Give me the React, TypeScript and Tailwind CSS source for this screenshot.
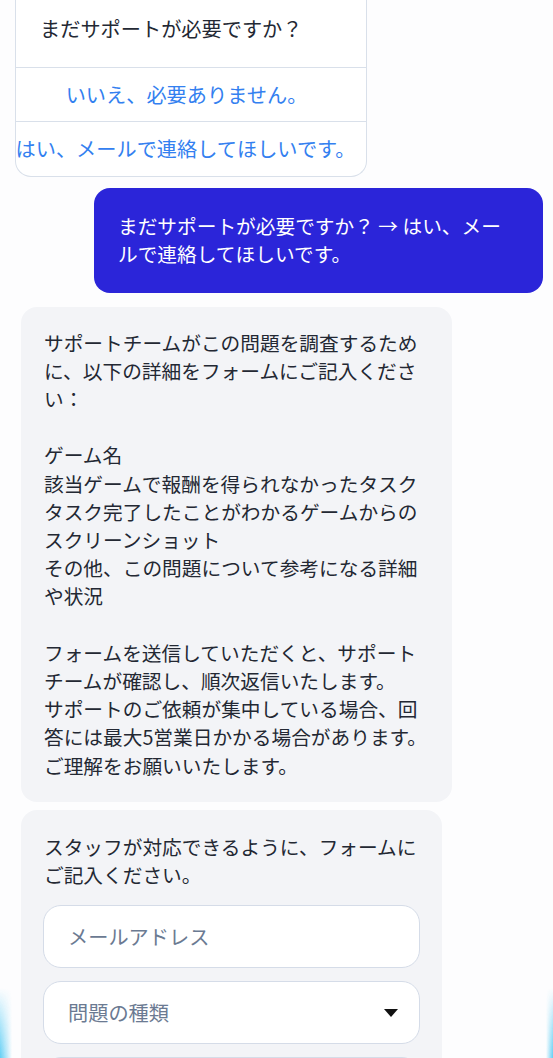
import { useState } from "react";

const botText = `サポートチームがこの問題を調査するために、以下の詳細をフォームにご記入ください：

ゲーム名
該当ゲームで報酬を得られなかったタスク
タスク完了したことがわかるゲームからのスクリーンショット
その他、この問題について参考になる詳細や状況

フォームを送信していただくと、サポートチームが確認し、順次返信いたします。
サポートのご依頼が集中している場合、回答には最大5営業日かかる場合があります。
ご理解をお願いいたします。`;

export default function App() {
  const [email, setEmail] = useState("");

  return (
    <div className="relative h-screen overflow-hidden bg-[#fdfdfe] font-['Noto_Sans_CJK_JP','Noto_Sans',sans-serif] text-[19.7px] leading-[28.2px] text-[#232833]">
      {/* soft cyan glow at the bottom edges */}
      <div className="pointer-events-none absolute bottom-0 left-0 h-[70px] w-[12px] bg-[linear-gradient(to_right,#4fc9f3,rgba(255,255,255,0))] opacity-90 [mask-image:linear-gradient(to_top,black,transparent)]" />
      <div className="pointer-events-none absolute bottom-0 right-0 h-[70px] w-[7px] bg-[linear-gradient(to_left,#4fc9f3,rgba(255,255,255,0))] opacity-90 [mask-image:linear-gradient(to_top,black,transparent)]" />

      <div className="relative flex flex-col">
        {/* quick reply card */}
        <div className="-mt-[10px] ml-[15px] w-[352px] overflow-hidden rounded-b-[16px] border-[1.5px] border-t-0 border-[#d9e0ea] bg-white text-[20.2px]">
          <div className="pl-[24px] pt-[25px] pb-[24px]">まだサポートが必要ですか？</div>
          <button className="flex h-[54px] w-full items-center justify-center border-t-[1.5px] border-[#d9e0ea] pr-[9px] text-[#3380f0]">
            いいえ、必要ありません。
          </button>
          <button className="flex h-[55px] w-full items-center justify-center whitespace-nowrap border-t-[1.5px] border-[#d9e0ea] pr-[11px] text-[#3380f0]">
            はい、メールで連絡してほしいです。
          </button>
        </div>

        {/* user message */}
        <div className="mt-[11px] mr-[10px] w-[449px] self-end rounded-[16px] bg-[#2b25d9] px-[24px] py-[24px] text-white">
          まだサポートが必要ですか？ → はい、メー
          <br />
          ルで連絡してほしいです。
        </div>

        {/* bot reply */}
        <div className="mt-[14px] ml-[21px] w-[431px] whitespace-pre-line rounded-[16px] bg-[#f3f4f7] px-[23px] py-[22px]">
          {botText}
        </div>

        {/* form */}
        <div className="mt-[8px] ml-[21px] w-[421px] rounded-[16px] bg-[#f3f4f7] px-[22px] pt-[23px] pb-6">
          <p className="pl-px">スタッフが対応できるように、フォームにご記入ください。</p>
          <div className="mt-[16px] flex flex-col gap-[13px] text-[20.2px]">
            <input
              value={email}
              onChange={(e) => setEmail(e.target.value)}
              placeholder="メールアドレス"
              className="h-[63px] w-full rounded-[18px] border-[1.5px] border-[#d5dce8] bg-white px-[24px] outline-none placeholder:text-[#6b7a92]"
            />
            <button className="flex h-[63px] w-full items-center justify-between rounded-[18px] border-[1.5px] border-[#d5dce8] bg-white pl-[24px] pr-[21px] text-[#6b7a92]">
              <span>問題の種類</span>
              <svg width="14" height="8" viewBox="0 0 14 8">
                <polygon points="0,0 14,0 7,8" fill="#111" />
              </svg>
            </button>
            <textarea
              placeholder="詳細"
              className="h-[120px] w-full resize-none rounded-[18px] border-[1.5px] border-[#d5dce8] bg-white px-[24px] py-[16px] outline-none placeholder:text-[#6b7a92]"
            />
          </div>
        </div>
      </div>
    </div>
  );
}
